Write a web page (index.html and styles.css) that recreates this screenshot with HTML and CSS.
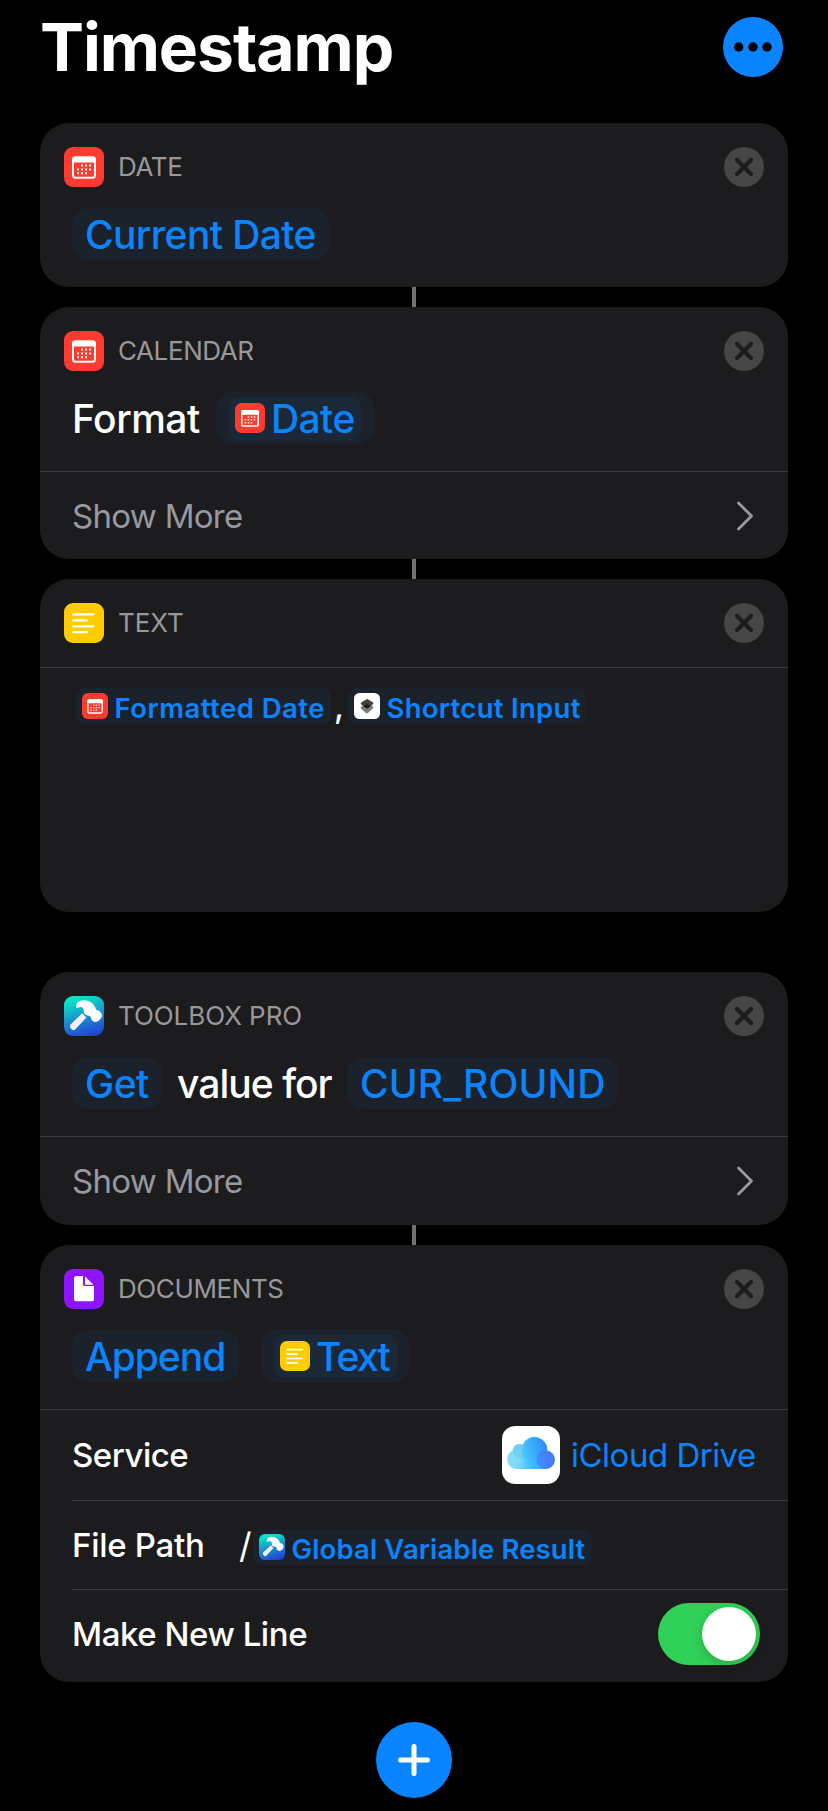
FILE: index.html
```html
<!DOCTYPE html>
<html lang="en">
<head>
<meta charset="utf-8">
<title>Timestamp</title>
<link rel="stylesheet" href="styles.css">
</head>
<body>
<svg class="defs" width="0" height="0" aria-hidden="true">
  <defs>
    <linearGradient id="teal" x1="0.35" y1="0" x2="0.65" y2="1">
      <stop offset="0" stop-color="#05e2c4"/><stop offset="0.1" stop-color="#0adcc6"/><stop offset="0.55" stop-color="#1a8ccd"/><stop offset="1" stop-color="#2340d6"/>
    </linearGradient>
    <linearGradient id="cloudMain" x1="0" y1="0.7" x2="1" y2="0.3">
      <stop offset="0" stop-color="#55ccfd"/><stop offset="0.4" stop-color="#3ab4fb"/><stop offset="1" stop-color="#348bee"/>
    </linearGradient>
    <linearGradient id="cloudBase" x1="0" y1="0" x2="1" y2="0">
      <stop offset="0" stop-color="#8bdcf8"/><stop offset="0.25" stop-color="#7cd8fa"/><stop offset="0.45" stop-color="#4ac4ff"/><stop offset="0.7" stop-color="#35aafc"/><stop offset="1" stop-color="#3c78f5"/>
    </linearGradient>
    <symbol id="calendar" viewBox="0 0 40 40">
      <rect width="40" height="40" rx="9" fill="#ff3b30"/>
      <rect x="9" y="10.4" width="22" height="20.4" rx="2.6" fill="none" stroke="#fff" stroke-width="2"/>
      <path d="M8 15.6V12.4a3 3 0 0 1 3-3H29a3 3 0 0 1 3 3V15.6Z" fill="#fff"/>
      <g fill="#fff"><path d="M17 17.6h2v2h-2zM21 17.6h2v2h-2zM25 17.6h2v2h-2zM13 21.4h2v2h-2zM17 21.4h2v2h-2zM21 21.4h2v2h-2zM25 21.4h2v2h-2zM13 25.2h2v2h-2zM17 25.2h2v2h-2zM21 25.2h2v2h-2z"/></g>
    </symbol>
    <symbol id="lines" viewBox="0 0 40 40">
      <rect width="40" height="40" rx="9" fill="#ffcc00"/>
      <path d="M9.2 11.4H29.4M9.2 17.4H22.9M9.2 23.3H29.4M9.2 29.2H22.9" stroke="#fff" stroke-width="2.2" stroke-linecap="round"/>
    </symbol>
    <symbol id="hammer" viewBox="0 0 40 40">
      <rect width="40" height="40" rx="9" fill="url(#teal)"/>
      <path d="M18.2 17.2 6.8 28.2a3 3 0 0 0-.5 3.2l.8 1.4a3 3 0 0 0 3.8 1L22.4 21.5Z" fill="#eef0f5"/>
      <path d="M11.800 9.500C13 6 16 4.200 20 4.200 25.600 4.300 29.800 7.600 31.400 11.600 31.900 13.400 32.400 14.500 33.500 14.300 35.500 14.100 38 17.500 38 19.600 37.600 22.600 34.500 25.800 31.400 26 28.600 25.600 26.800 23.600 27 21.500 26.200 19.800 25 19.400 23.400 19.400 20.900 18.900 19.500 17.400 19.800 15 20 12.400 18.600 11.200 16.600 11 14.700 10.900 13.500 12.200 12.400 11.900Z" fill="#fff"/>
    </symbol>
    <symbol id="document" viewBox="0 0 40 40">
      <rect width="40" height="40" rx="9" fill="#9013fe"/>
      <path d="M12.600 7H18.900V15.200A1.700 1.700 0 0 0 20.600 17H30V29.700A2.600 2.600 0 0 1 27.400 32.300H12.600A2.600 2.600 0 0 1 10 29.700V9.600A2.600 2.600 0 0 1 12.600 7Z" fill="#fff"/>
      <path d="M21 7.600 29.400 15.800H22A1 1 0 0 1 21 14.800Z" fill="#fff"/>
    </symbol>
    <symbol id="layers" viewBox="0 0 26 26">
      <rect width="26" height="26" rx="5.500" fill="#fff"/>
      <path d="M12 9.800a2 2 0 0 1 2 0L18.700 13.300a1.200 1.200 0 0 1 0 2.100L14 19.900a1.800 1.800 0 0 1-2.100 0L7.300 15.900a1.200 1.200 0 0 1 0-2.100Z" fill="#7d7d7d"/>
      <path d="M12 6.400a2 2 0 0 1 2.100 0L18.800 9.300a1.200 1.200 0 0 1 0 2L14.100 15a1.800 1.800 0 0 1-2.100 0L7.300 11.500a1.200 1.200 0 0 1 0-2Z" fill="#404040"/>
      <path d="M9.600 13.200 12 11.600a2 2 0 0 1 2 0L16.500 13.200 14.100 15a1.800 1.800 0 0 1-2.100 0Z" fill="#1c1c1c"/>
    </symbol>
    <symbol id="close" viewBox="0 0 40 40">
      <circle cx="20" cy="20" r="20" fill="#464646"/>
      <path d="M13 13 27 27M27 13 13 27" stroke="#1c1c1e" stroke-width="4.200" stroke-linecap="round"/>
    </symbol>
    <symbol id="chevron" viewBox="0 0 18 32">
      <path d="M2.500 3 15.500 16 2.500 29" fill="none" stroke="#98989f" stroke-width="2.800" stroke-linecap="round" stroke-linejoin="round"/>
    </symbol>
  </defs>
</svg>

<header class="page-head">
  <h1 class="title">Timestamp</h1>
  <svg class="menu" viewBox="0 0 60 60" role="img" aria-label="Menu">
    <circle cx="30" cy="30" r="30" fill="#0a84ff"/>
    <g fill="#000"><circle cx="15.700" cy="30" r="4.700"/><circle cx="30" cy="30" r="4.700"/><circle cx="44" cy="30" r="4.700"/></g>
  </svg>
</header>

<main class="flow">
  <section class="card card-date">
    <div class="card-head"><svg class="app"><use href="#calendar"/></svg><span class="name n-date">DATE</span><svg class="close"><use href="#close"/></svg></div>
    <div class="sentence"><span class="pill p-current"><span class="big t-current">Current Date</span></span></div>
  </section>
  <div class="link"></div>

  <section class="card card-calendar">
    <div class="card-head"><svg class="app"><use href="#calendar"/></svg><span class="name n-calendar">CALENDAR</span><svg class="close"><use href="#close"/></svg></div>
    <div class="sentence"><span class="word w-format"><span class="big t-format">Format</span></span><span class="pill nested p-dt"><span class="inner"><svg class="mid"><use href="#calendar"/></svg><span class="big t-dt">Date</span></span></span></div>
    <div class="more"><span class="label t-more">Show More</span><svg class="chevron"><use href="#chevron"/></svg></div>
  </section>
  <div class="link"></div>

  <section class="card card-text">
    <div class="card-head"><svg class="app"><use href="#lines"/></svg><span class="name n-text">TEXT</span><svg class="close"><use href="#close"/></svg></div>
    <div class="editor">
      <span class="token k-formatted"><svg class="small"><use href="#calendar"/></svg><span class="tok t-formatted">Formatted Date</span></span>
      <span class="comma">,</span>
      <span class="token k-shortcut"><svg class="small"><use href="#layers"/></svg><span class="tok t-shortcut">Shortcut Input</span></span>
    </div>
  </section>
  <div class="space"></div>

  <section class="card card-toolbox">
    <div class="card-head"><svg class="app"><use href="#hammer"/></svg><span class="name n-toolbox">TOOLBOX PRO</span><svg class="close"><use href="#close"/></svg></div>
    <div class="sentence"><span class="pill p-get"><span class="big t-get">Get</span></span><span class="word w-value"><span class="big t-value">value for</span></span><span class="pill p-cur"><span class="big t-cur">CUR_ROUND</span></span></div>
    <div class="more"><span class="label t-more">Show More</span><svg class="chevron"><use href="#chevron"/></svg></div>
  </section>
  <div class="link"></div>

  <section class="card card-documents">
    <div class="card-head"><svg class="app"><use href="#document"/></svg><span class="name n-documents">DOCUMENTS</span><svg class="close"><use href="#close"/></svg></div>
    <div class="sentence"><span class="pill p-append"><span class="big t-append">Append</span></span><span class="pill nested p-text"><span class="inner"><svg class="mid"><use href="#lines"/></svg><span class="big t-text">Text</span></span></span></div>
    <div class="rows">
      <div class="row r-service">
        <span class="label strong t-service">Service</span>
        <svg class="cloud" viewBox="0 0 58 58">
          <rect width="58" height="58" rx="13" fill="#fff"/>
          <path d="M14.500 43A9.700 9.700 0 0 1 10.500 24.600A7.300 7.300 0 0 1 20.700 18.500A12.800 12.800 0 0 1 45.200 24.600A9.300 9.300 0 0 1 43.800 43Z" fill="url(#cloudBase)"/>
          <path d="M25.500 43 20.200 27.500C19.500 18.500 25 12 32.500 12 39.800 12 45.200 18 45.200 24.600L43 43Z" fill="url(#cloudMain)"/>
          <circle cx="43.800" cy="33.700" r="9.300" fill="#4a75fa" opacity=".55"/>
          <circle cx="17.800" cy="25" r="7" fill="#4fc2ee" opacity=".35"/>
        </svg>
        <span class="label blue t-icloud">iCloud Drive</span>
      </div>
      <div class="row r-path">
        <span class="label strong t-file">File Path</span>
        <span class="label strong slash">/</span>
        <span class="token k-global"><svg class="small"><use href="#hammer"/></svg><span class="tok t-global">Global Variable Result</span></span>
      </div>
      <div class="row r-line">
        <span class="label strong t-make">Make New Line</span>
        <span class="toggle"><span class="knob"></span></span>
      </div>
    </div>
  </section>
</main>

<svg class="add" viewBox="0 0 76 76" role="img" aria-label="Add">
  <circle cx="38" cy="38" r="38" fill="#0a84ff"/>
  <path d="M38 24.500V51.500M24.500 38H51.500" stroke="#fff" stroke-width="5" stroke-linecap="round"/>
</svg>
</body>
</html>
```
FILE: styles.css
```css
* { box-sizing: border-box; }
body {
  margin: 0;
  width: 828px;
  height: 1811px;
  overflow: hidden;
  background: #000;
  color: #fff;
  font-family: Inter, "Liberation Sans", sans-serif;
  font-weight: 400;
  white-space: nowrap;
}
svg { display: block; flex: none; }
.defs { position: absolute; }

.page-head {
  display: flex;
  justify-content: space-between;
  height: 123px;
  padding: 17px 45px 0 40px;
}
.title { margin: 0; font-size: 66px; line-height: 60px; font-weight: 700; letter-spacing: -1.1px; }
.menu { width: 60px; height: 60px; }

.flow { padding: 0 40px; }
.card { display: flex; flex-direction: column; background: #1c1c1e; border-radius: 29px; overflow: hidden; }
.card-date { height: 164px; }
.card-calendar { height: 252px; }
.card-text { height: 333px; }
.card-toolbox { height: 253px; }
.card-documents { height: 437px; }
.link { width: 4px; height: 20px; margin: 0 auto; background: #717178; }
.space { height: 60px; }

.card-head { display: flex; align-items: center; height: 40px; margin: 24px 24px 0; }
.app, .close { width: 40px; height: 40px; }
.close { margin-left: auto; }
.name { padding-left: 14px; font-size: 26px; line-height: 40px; color: #98989b; letter-spacing: -0.4px; }
.n-text, .n-toolbox { letter-spacing: -0.05px; }

.sentence { display: flex; height: 52px; margin: 21px 32px 27px; }
.pill { display: flex; align-items: center; height: 52px; padding-left: 13px; border-radius: 16px; background: #1b222b; color: #0a84ff; }
.word { display: flex; align-items: center; height: 52px; }
.big { font-size: 39px; line-height: 50px; padding-top: 2px; letter-spacing: -0.6px; font-weight: 450; }
.inner { display: flex; align-items: center; height: 43px; padding-left: 6px; border-radius: 10px; background: #1a2837; }
.nested { padding-left: 13px; }
.nested .big { padding-left: 6px; }
.mid { width: 30px; height: 30px; }
.t-format { letter-spacing: -0.5px; }
.t-get { letter-spacing: -0.5px; }
.t-value { letter-spacing: -0.95px; }
.t-cur { letter-spacing: 0.2px; }
.t-append { letter-spacing: -1px; }
.t-text { letter-spacing: -1.8px; }

.p-current { width: 257px; }
.w-format { width: 144px; }
.p-dt { width: 158px; }
.p-dt .inner { width: 132px; }
.p-get { width: 90px; }
.w-value { width: 185px; padding-left: 15px; }
.p-cur { width: 271px; }
.p-append { width: 167px; margin-right: 22px; }
.p-text { width: 149px; }
.p-text .inner { width: 123px; }

.more { display: flex; align-items: center; justify-content: space-between; flex: 1; border-top: 1px solid #3a3a3c; padding: 0 34px 0 32px; }
.label { font-size: 33px; line-height: 40px; color: #98989f; }
.t-more { letter-spacing: -0.7px; }
.chevron { width: 18px; height: 32px; }

.editor { display: flex; margin-top: 24px; border-top: 1px solid #3a3a3c; padding: 20px 36px; height: 200px; }
.token { display: flex; align-items: center; height: 36px; padding-left: 6px; border-radius: 8px; background: #1b222b; color: #0a84ff; }
.small { width: 26px; height: 26px; }
.tok { padding: 3px 0 0 6.5px; font-size: 27.5px; line-height: 34px; font-weight: 600; }
.t-formatted { letter-spacing: 0.48px; }
.t-shortcut { letter-spacing: 0.3px; }
.t-global { letter-spacing: 0.13px; }
.k-formatted { width: 255px; }
.comma { width: 17px; padding-left: 3px; font-size: 33px; line-height: 37px; font-weight: 450; }
.k-shortcut { width: 238px; }

.rows { border-top: 1px solid #3a3a3c; padding-left: 32px; }
.row { display: flex; align-items: center; padding-right: 32px; }
.r-service { height: 90px; }
.r-path { height: 89px; border-top: 1px solid #3a3a3c; }
.r-line { height: 88px; border-top: 1px solid #3a3a3c; padding-right: 28px; }
.strong { color: #fff; font-weight: 450; }
.blue { color: #0a84ff; }
.cloud { width: 58px; height: 58px; margin: 0 11px 0 auto; }
.t-service { letter-spacing: -0.5px; }
.t-icloud { width: 185px; letter-spacing: -0.5px; }
.t-file { width: 167px; letter-spacing: -0.3px; }
.t-make { letter-spacing: -0.45px; }
.slash { width: 14px; font-size: 35px; font-weight: 400; }
.k-global { width: 339px; margin-top: 4px; }
.toggle { display: flex; justify-content: flex-end; width: 102px; height: 62px; margin-left: auto; padding: 4px; border-radius: 31px; background: #30d158; }
.knob { width: 54px; height: 54px; border-radius: 50%; background: #fff; box-shadow: 0 4px 12px rgba(0, 0, 0, .18); }

.add { width: 76px; height: 76px; margin: 40px auto 0; }
```
